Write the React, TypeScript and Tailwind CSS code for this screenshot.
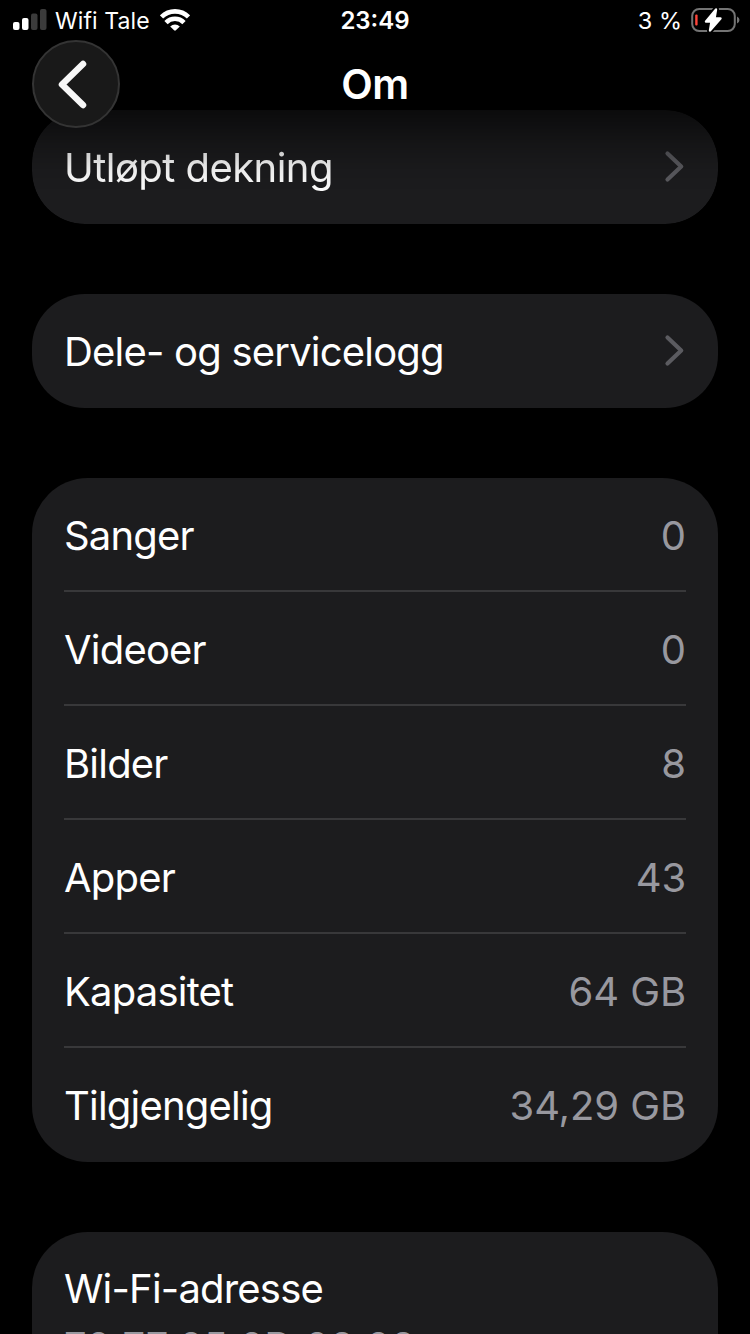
import React from 'react';

interface InfoRow {
  label: string;
  value: string;
}

const rows: InfoRow[] = [
  { label: 'Sanger', value: '0' },
  { label: 'Videoer', value: '0' },
  { label: 'Bilder', value: '8' },
  { label: 'Apper', value: '43' },
  { label: 'Kapasitet', value: '64 GB' },
  { label: 'Tilgjengelig', value: '34,29 GB' },
];

const Chevron = () => (
  <svg width="22" height="34" viewBox="0 0 22 34" fill="none" className="text-[#5b5b60]">
    <path d="M3.5 3.5 L17.2 16.5 L3.5 29.5" stroke="currentColor" strokeWidth="4.2" strokeLinecap="round" strokeLinejoin="round" />
  </svg>
);

const SignalBars = () => (
  <svg width="34" height="22" viewBox="0 0 34 22">
    <rect x="0" y="13" width="6.5" height="8" rx="2" fill="#fff" />
    <rect x="9" y="9" width="6.5" height="12" rx="2" fill="#fff" />
    <rect x="18" y="4.5" width="6.5" height="16.5" rx="2" fill="#3b3b3b" />
    <rect x="27" y="0" width="6.5" height="21" rx="2" fill="#3b3b3b" />
  </svg>
);

const WifiIcon = () => (
  <svg width="30" height="22" viewBox="0 0 30 22" fill="none" stroke="#fff" strokeWidth="4.6">
    <path d="M1.5 8 A19 19 0 0 1 28.5 8" />
    <path d="M6 13.6 A12.6 12.6 0 0 1 24 13.6" />
    <path d="M10.2 17.4 A7 7 0 0 1 19.8 17.4 L15.9 21.3 Q15 22 14.1 21.3 Z" fill="#fff" stroke="none" />
  </svg>
);

const BatteryIcon = () => (
  <svg width="49" height="26" viewBox="0 0 49 26" fill="none">
    <rect x="1.2" y="2" width="42.6" height="22" rx="7" stroke="#747474" strokeWidth="2" />
    <path d="M46 9.5 Q48.5 10.5 48.5 13 Q48.5 15.5 46 16.5 Z" fill="#747474" />
    <rect x="4.2" y="7.5" width="2.4" height="11" rx="1" fill="#ff453a" />
    <path d="M25 2.5 L15 14.5 H20.5 L19 23.5 L29.5 11.5 H23.5 Z" fill="#000" stroke="#000" strokeWidth="6" strokeLinejoin="round" />
    <path d="M25 2.5 L15 14.5 H20.5 L19 23.5 L29.5 11.5 H23.5 Z" fill="#fff" stroke="#fff" strokeWidth="2.4" strokeLinejoin="round" />
  </svg>
);

const StatusBar = () => (
  <div className="grid h-10 grid-cols-3 items-center px-[10px] pb-[3px] text-[24px] leading-[37px] text-white">
    <div className="flex items-center pl-[3px] whitespace-nowrap">
      <SignalBars />
      <span className="mr-[10px] ml-2 pt-[3px] text-[23px] tracking-[0.1px]">Wifi Tale</span>
      <WifiIcon />
    </div>
    <div className="pt-px text-center font-semibold">23:49</div>
    <div className="flex items-center justify-end gap-[9px]">
      <span className="text-[23.5px]">3 %</span>
      <BatteryIcon />
    </div>
  </div>
);

const NavBar = () => (
  <div className="grid h-[70px] grid-cols-3 px-8">
    <button className="relative z-10 flex size-[88px] items-center justify-center rounded-full border-2 border-[#343434] bg-[#191919]">
      <svg width="32" height="50" viewBox="0 0 32 50" fill="none" className="mr-2">
        <path d="M27 5 L6 25.5 L27 46" stroke="#f7f7f7" strokeWidth="6.5" strokeLinecap="round" strokeLinejoin="round" />
      </svg>
    </button>
    <h1 className="pt-[14px] text-center text-[41px] leading-[60px] font-semibold tracking-[-0.5px] text-white">Om</h1>
  </div>
);

interface LinkCardProps {
  label: string;
  faded?: boolean;
}

const LinkCard: React.FC<LinkCardProps> = ({ label, faded }) => (
  <div className={`flex h-[114px] items-center justify-between rounded-[53px] bg-[#1c1c1e] px-8 ${faded ? 'tracking-[-0.55px] mask-[linear-gradient(to_bottom,rgba(0,0,0,0.4)_0px,rgba(0,0,0,0.75)_35px,rgba(0,0,0,0.92)_60px,black_85px)]' : ''}`}>
    <span className="pt-[2px]">{label}</span>
    <Chevron />
  </div>
);

export default function App() {
  return (
    <div className="h-[1334px] w-[750px] overflow-hidden bg-black font-['Inter',sans-serif]">
      <StatusBar />
      <NavBar />
      <main className="flex flex-col gap-[70px] px-8 text-[40px] leading-[50px] tracking-[-0.8px] text-white">
        <LinkCard label="Utløpt dekning" faded />
        <LinkCard label="Dele- og servicelogg" />

        <div className="rounded-[56px] bg-[#1c1c1e] px-8">
          {rows.map((row) => (
            <div key={row.label} className="flex h-[114px] items-center justify-between border-b-2 border-[#38383a] pt-[3px] last:border-b-0 last:pt-px">
              <span>{row.label}</span>
              <span className="tracking-[-0.1px] text-[#98989f]">{row.value}</span>
            </div>
          ))}
        </div>

        <div className="h-[160px] rounded-t-[56px] bg-[#1c1c1e] px-8 pt-8">
          <div>Wi-Fi-adresse</div>
          <div className="pt-[8px] tracking-[-0.1px] text-[#98989f]">70:77:05:0D:08:08</div>
        </div>
      </main>
    </div>
  );
}
